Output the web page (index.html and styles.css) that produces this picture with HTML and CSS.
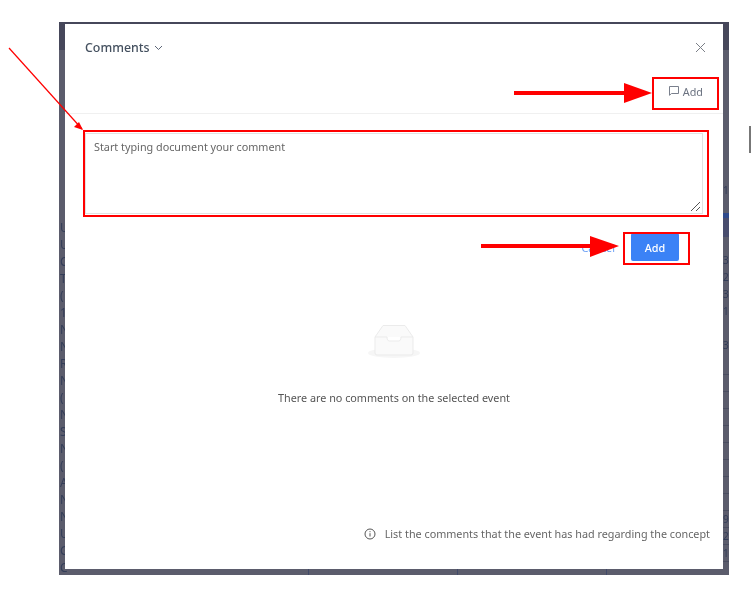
FILE: index.html
```
<!DOCTYPE html>
<html lang="en">
<head>
<meta charset="UTF-8" />
<title>Comments</title>
<link rel="stylesheet" href="styles.css">
</head>
<body>
<div class="backdrop">
  <div class="strip strip-left">
    <span>U</span><span>U</span><span>C</span><span>T</span><span>(</span><span>1</span><span>N</span><span>N</span><span>R</span><span>N</span><span>(</span><span>N</span><span>S</span><span>N</span><span>(</span><span>A</span><span>N</span><span>N</span><span>U</span><span>G</span><span>C</span>
  </div>
  <div class="strip strip-right">
    <span>1</span>
    <div class="band"></div>
    <span>3</span><span>2</span><span>3</span><span>1</span><span></span><span>3</span>
    <div class="rows">
      <span></span><span></span><span></span><span></span><span></span><span></span><span></span><span></span><span></span>
      <span>9</span><span>2</span><span>1</span>
    </div>
  </div>
  <div class="strip-bottom"><i></i><i></i><i></i></div>
  <div class="modal">
    <header class="modal-head">
      <div class="modal-title">Comments
        <svg class="chevron" width="9" height="6" viewBox="0 0 9 6"><path d="M1 1l3.500 3.500L8 1" fill="none" stroke="#4a5568" stroke-width="0.9"/></svg>
      </div>
      <svg class="close" width="11" height="11" viewBox="0 0 11 11"><path d="M1 1l9 9M10 1l-9 9" fill="none" stroke="#7b7f87" stroke-width="1"/></svg>
    </header>
    <div class="toolbar">
      <button class="add-link">
        <svg width="12" height="12" viewBox="0 0 12 12"><path d="M1.500 1.500h9v7h-7l-2 1.800z" fill="none" stroke="#6b7280" stroke-width="0.9"/></svg>
        Add
      </button>
    </div>
    <div class="editor">
      <div class="textarea">
        Start typing document your comment
        <svg class="grip" width="11" height="11" viewBox="0 0 11 11"><path d="M1 10l9-9M6 10l4-4" fill="none" stroke="#555" stroke-width="1"/></svg>
      </div>
      <div class="editor-actions">
        <a class="cancel">Cancel</a>
        <button class="btn-add">Add</button>
      </div>
    </div>
    <div class="empty">
      <svg width="56" height="36" viewBox="0 0 56 36">
        <ellipse cx="28" cy="28" rx="26" ry="5" fill="#f6f6f6"/>
        <path d="M9 12L17 .5h22L47 12v16a2 2 0 0 1-2 2H11a2 2 0 0 1-2-2z" fill="#fafafa" stroke="#ebebeb"/>
        <path d="M9 12h12c0 2 1 4 2 4h10c1 0 2-2 2-4h12" fill="#fff" stroke="#ebebeb"/>
      </svg>
      <p>There are no comments on the selected event</p>
    </div>
    <footer class="hint">
      <svg width="12" height="12" viewBox="0 0 12 12"><circle cx="6" cy="6" r="5" fill="none" stroke="#555" stroke-width="1"/><path d="M6 5.200v3.300M6 3.200v1" stroke="#555" stroke-width="1"/></svg>
      List the comments that the event has had regarding the concept
    </footer>
  </div>
</div>
<div class="side-mark"></div>

<!-- annotations drawn on top of the screenshot -->
<div class="mark mark-toolbar"></div>
<div class="mark mark-editor"></div>
<div class="mark mark-button"></div>
<svg class="arrows" width="752" height="592" viewBox="0 0 752 592">
  <path d="M514 93H626" stroke="#f00" stroke-width="4"/>
  <path d="M624 83l28 10-28 10z" fill="#f00"/>
  <path d="M481 246H592" stroke="#f00" stroke-width="4"/>
  <path d="M590 236l29 10-29 11z" fill="#f00"/>
  <path d="M9 48L82 129" stroke="#f00" stroke-width="1.200"/>
  <path d="M83 130l-9-3 5-5z" fill="#f00"/>
</svg>
</body>
</html>
```

FILE: styles.css
```
* {
  box-sizing: border-box;
}
body {
  margin: 0;
  height: 592px;
  overflow: hidden;
  background: #fff;
  font-family: 'Noto Sans', sans-serif;
  color: #444;
  padding: 22px 0 0 59px;
  filter: blur(0.35px);
}
.backdrop {
  position: relative;
  width: 670px;
  height: 553px;
  padding: 2px 6px 6px 6px;
  overflow: hidden;
  background: linear-gradient(#46475a 0, #46475a 28px, #5b5c6c 28px);
}
.strip {
  position: absolute;
  display: flex;
  flex-direction: column;
  font-size: 10px;
  line-height: 17px;
  color: #333d58;
}
.strip span {
  height: 17px;
}
.strip-left {
  left: 1px;
  top: 197px;
  font-size: 12px;
}
.strip-right {
  left: 664px;
  width: 6px;
  top: 160px;
}
.band {
  height: 24px;
  margin: 14px 0 15px;
  background: linear-gradient(#2f4a8c 0, #2f4a8c 5px, #494d6e 5px);
}
.rows {
  margin-top: 4px;
  display: flex;
  flex-direction: column;
}
.rows span {
  border-bottom: 1px solid rgba(50, 55, 80, 0.4);
}
.strip-bottom {
  position: absolute;
  left: 0;
  bottom: 0;
  display: flex;
  height: 6px;
}
.strip-bottom i {
  width: 149px;
  border-right: 1px solid #414a6a;
}
.strip-bottom i:first-child {
  width: 250px;
}
.modal {
  position: relative;
  height: 100%;
  background: #fff;
  display: flex;
  flex-direction: column;
}
.modal-head {
  display: flex;
  justify-content: space-between;
  align-items: center;
  padding: 2px 17px 0 20px;
  height: 45px;
}
.modal-title {
  display: flex;
  align-items: center;
  gap: 4px;
  font-size: 12.400px;
  font-weight: 500;
  color: #44505f;
}
.toolbar {
  display: flex;
  justify-content: flex-end;
  height: 45px;
  padding: 12px 20px 0 0;
  border-bottom: 1px solid #f0f0f0;
}
.add-link {
  display: flex;
  align-items: center;
  gap: 3px;
  height: 20px;
  padding: 0;
  border: 0;
  background: none;
  font: 10.800px 'Noto Sans', sans-serif;
  color: #6b7280;
}
.editor {
  padding: 19px 20px 0 20px;
}
.textarea {
  position: relative;
  height: 81px;
  padding: 5px 8px;
  border: 1px solid #e2e2e2;
  font-size: 10.800px;
  line-height: 16px;
  color: #666;
}
.grip {
  position: absolute;
  right: 1px;
  bottom: 1px;
}
.editor-actions {
  display: flex;
  justify-content: flex-end;
  align-items: center;
  gap: 16px;
  margin-top: 19px;
  padding-right: 24px;
}
.cancel {
  font-size: 10.800px;
  color: #6b9ff5;
}
.btn-add {
  width: 48px;
  height: 28px;
  border: 0;
  border-radius: 2px;
  background: #3b82f6;
  color: #fff;
  font: 500 10.800px 'Noto Sans', sans-serif;
}
.empty {
  display: flex;
  flex-direction: column;
  align-items: center;
  margin-top: 64px;
}
.empty p {
  margin: 29px 0 0;
  font-size: 10.800px;
  line-height: 16px;
  color: #555;
}
.hint {
  display: flex;
  justify-content: flex-end;
  align-items: center;
  gap: 9px;
  margin-top: auto;
  padding: 0 13px 27px 0;
  font-size: 10.800px;
  line-height: 16px;
  color: #666;
}
.side-mark {
  position: absolute;
  left: 749px;
  top: 126px;
  width: 2px;
  height: 27px;
  background: #777;
}
.mark {
  position: absolute;
  border: 2.500px solid #f00;
}
.mark-toolbar {
  left: 652px;
  top: 77px;
  width: 67px;
  height: 33px;
}
.mark-editor {
  left: 83px;
  top: 130px;
  width: 626px;
  height: 87px;
}
.mark-button {
  left: 623px;
  top: 232px;
  width: 67px;
  height: 33px;
}
.arrows {
  position: absolute;
  left: 0;
  top: 0;
}
```
